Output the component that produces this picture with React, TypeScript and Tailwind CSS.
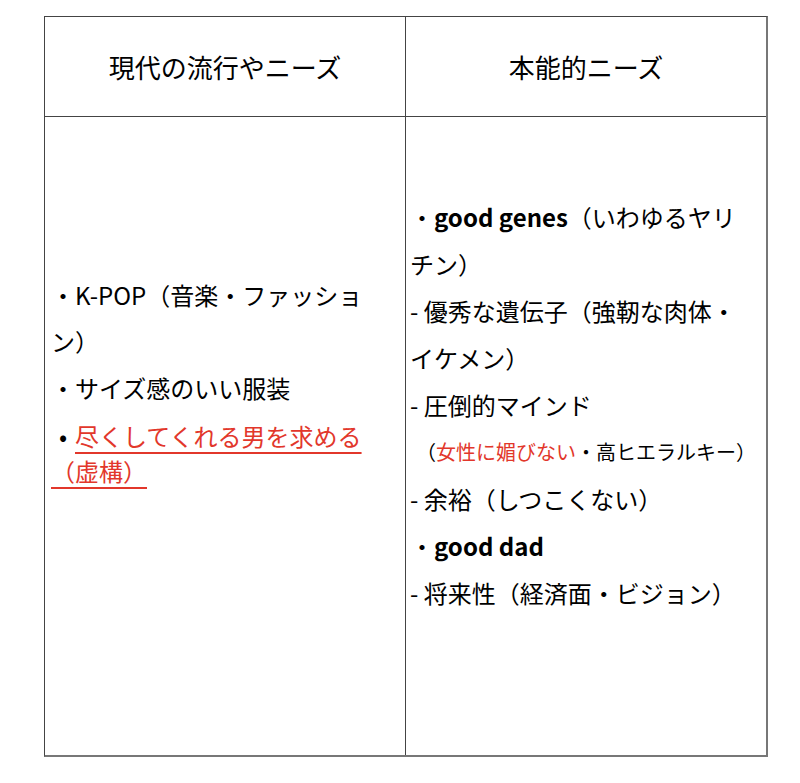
import React from "react";

const font = { fontFamily: '"Noto Sans CJK JP", "Noto Sans", sans-serif' };

export default function App() {
  return (
    <div className="w-[800px] h-[783px] bg-white pl-[44px] pt-[16px] text-black" style={font}>
      <div className="w-[724px] h-[741px] border border-[#444] border-r-2 border-b-2 border-r-[#777] border-b-[#777] grid grid-cols-[361px_1fr] grid-rows-[100px_1fr]">
        <div className="border-r border-b border-[#444] flex items-center justify-center text-[26px] leading-none">
          現代の流行やニーズ
        </div>
        <div className="border-b border-[#444] flex items-center justify-center text-[26px] leading-none">
          本能的ニーズ
        </div>
        <div className="border-r border-[#444] pl-[6px] pt-[155px] text-[24px] whitespace-nowrap">
          <div className="leading-[46px]">
            ・K-POP（音楽・ファッショ
            <br />
            ン）
          </div>
          <div className="leading-[47px]">・サイズ感のいい服装</div>
          <div className="leading-[35px] mt-[7px]">
            <span className="inline-block w-[24px] text-center">•</span>
            <span className="text-[#e2372b] underline decoration-[#e2372b] decoration-[1.5px] underline-offset-[6px]">
              尽くしてくれる男を求める
            </span>
            <br />
            <span className="text-[#e2372b] underline decoration-[#e2372b] decoration-[1.5px] underline-offset-[6px]">
              （虚構）
            </span>
          </div>
        </div>
        <div className="pl-[4px] pt-[76px] text-[24px] leading-[47px] whitespace-nowrap">
          <div>
            ・<span className="font-bold">good genes</span>（いわゆるヤリ
            <br />
            チン）
          </div>
          <div>
            - 優秀な遺伝子（強靭な肉体・
            <br />
            イケメン）
          </div>
          <div>- 圧倒的マインド</div>
          <div className="text-[20px] pl-[6px]">
            （<span className="text-[#e2372b]">女性に媚びない</span>・高ヒエラルキー）
          </div>
          <div>- 余裕（しつこくない）</div>
          <div>
            ・<span className="font-bold">good dad</span>
          </div>
          <div>- 将来性（経済面・ビジョン）</div>
        </div>
      </div>
    </div>
  );
}
